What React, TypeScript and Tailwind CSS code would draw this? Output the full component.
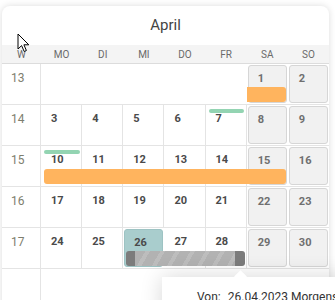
import React from "react";

type Ev = { col: string; cls: string; kind: "orange" | "green" | "busy" };

const weeks: { w: number; days: (number | null)[]; today?: number; events: Ev[] }[] = [
  {
    w: 13,
    days: [null, null, null, null, null, 1, 2],
    events: [{ col: "col-start-7 col-span-1 mr-[2px] rounded-r-[3px]", cls: "", kind: "orange" }],
  },
  {
    w: 14,
    days: [3, 4, 5, 6, 7, 8, 9],
    events: [{ col: "col-start-6 col-span-1 ml-[3px] mr-[3px]", cls: "", kind: "green" }],
  },
  {
    w: 15,
    days: [10, 11, 12, 13, 14, 15, 16],
    events: [
      { col: "col-start-2 col-span-1 ml-[3px] mr-[2px]", cls: "", kind: "green" },
      { col: "col-start-2 col-span-6 ml-[3px] mr-[2px] rounded-[3px]", cls: "", kind: "orange" },
    ],
  },
  { w: 16, days: [17, 18, 19, 20, 21, 22, 23], events: [] },
  {
    w: 17,
    days: [24, 25, 26, 27, 28, 29, 30],
    today: 26,
    events: [{ col: "col-start-4 col-span-3 ml-[3px] mr-[2px]", cls: "", kind: "busy" }],
  },
];

const colStart = ["col-start-2", "col-start-3", "col-start-4", "col-start-5", "col-start-6", "col-start-7", "col-start-8"];
const labels = ["MO", "DI", "MI", "DO", "FR", "SA", "SO"];

function EventBar({ ev }: { ev: Ev }) {
  if (ev.kind === "green") {
    return <div className={`row-start-1 self-start mt-[4px] h-[4px] rounded-full bg-[#93d4b2] ${ev.col}`} />;
  }
  if (ev.kind === "orange") {
    return <div className={`row-start-1 self-start mt-[23px] h-[15px] bg-[#ffb45e] ${ev.col}`} />;
  }
  return (
    <div className={`row-start-1 self-start mt-[23px] flex h-[15px] overflow-hidden rounded-[3px] ${ev.col}`}>
      <div className="w-[9px] bg-[#7c7c7c]" />
      <div className="flex-1 bg-[repeating-linear-gradient(120deg,#b2b2b2_0px,#b2b2b2_9px,#bdbdbd_9px,#bdbdbd_13px)]" />
      <div className="w-[10px] bg-[#7c7c7c]" />
    </div>
  );
}

function Week({ week }: { week: (typeof weeks)[number] }) {
  return (
    <div className="grid h-[41px] grid-cols-[39px_repeat(7,1fr)] grid-rows-1 border-b border-[#e4e4e4]">
      <div className="col-start-1 row-start-1 border-r border-[#e4e4e4] pl-[9px] pt-[7px] text-[12px] leading-[14px] text-[#7e7e6e]">
        {week.w}
      </div>
      {week.days.map((d, i) => {
        const weekend = i >= 5;
        if (d === null) {
          return <div key={i} className={`row-start-1 ${colStart[i]}`} />;
        }
        if (weekend || d === week.today) {
          return (
            <div key={i} className={`row-start-1 p-px ${colStart[i]}`}>
              <div
                className={`h-full rounded-[3px] border pl-[9px] pt-[6px] text-[11px] font-bold leading-[14px] ${
                  weekend
                    ? "border-[#d6d6d6] bg-[#f1f1f1] text-[#6f6f6f]"
                    : "border-[#9dc3c3] bg-[#a9cdcd] text-[#4a4a4a]"
                }`}
              >
                {d}
              </div>
            </div>
          );
        }
        return (
          <div
            key={i}
            className={`row-start-1 border-r border-[#e4e4e4] pl-[10px] pt-[7px] text-[11px] font-bold leading-[14px] text-[#4a4a4a] ${colStart[i]}`}
          >
            {d}
          </div>
        );
      })}
      {week.events.map((ev, i) => (
        <EventBar key={i} ev={ev} />
      ))}
    </div>
  );
}

export default function App() {
  return (
    <div className="relative h-[300px] w-[335px] overflow-hidden bg-white font-['Roboto',sans-serif]">
      <div className="ml-[2px] mt-[6px] w-[327px] rounded-t-lg bg-white shadow-[0_0_7px_rgba(0,0,0,0.14)]">
        <div className="flex h-[39px] items-center justify-center text-[15px] text-[#444]">April</div>

        <div className="grid h-[19px] grid-cols-[39px_repeat(7,1fr)] items-center border-b border-[#dcdcdc] bg-[#f4f4f4] text-center text-[10px] text-[#6a6a6a]">
          <div>W</div>
          {labels.map((l) => (
            <div key={l}>{l}</div>
          ))}
        </div>

        {weeks.map((w) => (
          <Week key={w.w} week={w} />
        ))}

        <div className="grid h-[41px] grid-cols-[39px_repeat(7,1fr)]">
          <div className="border-r border-[#e4e4e4]" />
        </div>
      </div>

      {/* tooltip */}
      <div className="absolute left-[162px] top-[277px] h-[60px] w-[220px] bg-white shadow-[0_0_22px_rgba(0,0,0,0.16)]">
        <div className="absolute left-[74px] top-[-5px] h-[9px] w-[9px] rotate-45 bg-white" />
        <div className="relative flex pl-[35px] pt-[12px] text-[12px] leading-[16px] text-[#333]">
          <span>Von:</span>
          <span className="ml-[7px]">26.04.2023 Morgens</span>
        </div>
      </div>

      {/* mouse pointer */}
      <svg className="absolute left-[17px] top-[33px]" width="14" height="20" viewBox="0 0 14 20">
        <path d="M1 1 L1 16 L4.6 12.6 L7.2 18.5 L9.4 17.5 L6.9 11.8 L11.8 11.8 Z" fill="#fff" stroke="#000" strokeWidth="1" strokeLinejoin="round" />
      </svg>
    </div>
  );
}
